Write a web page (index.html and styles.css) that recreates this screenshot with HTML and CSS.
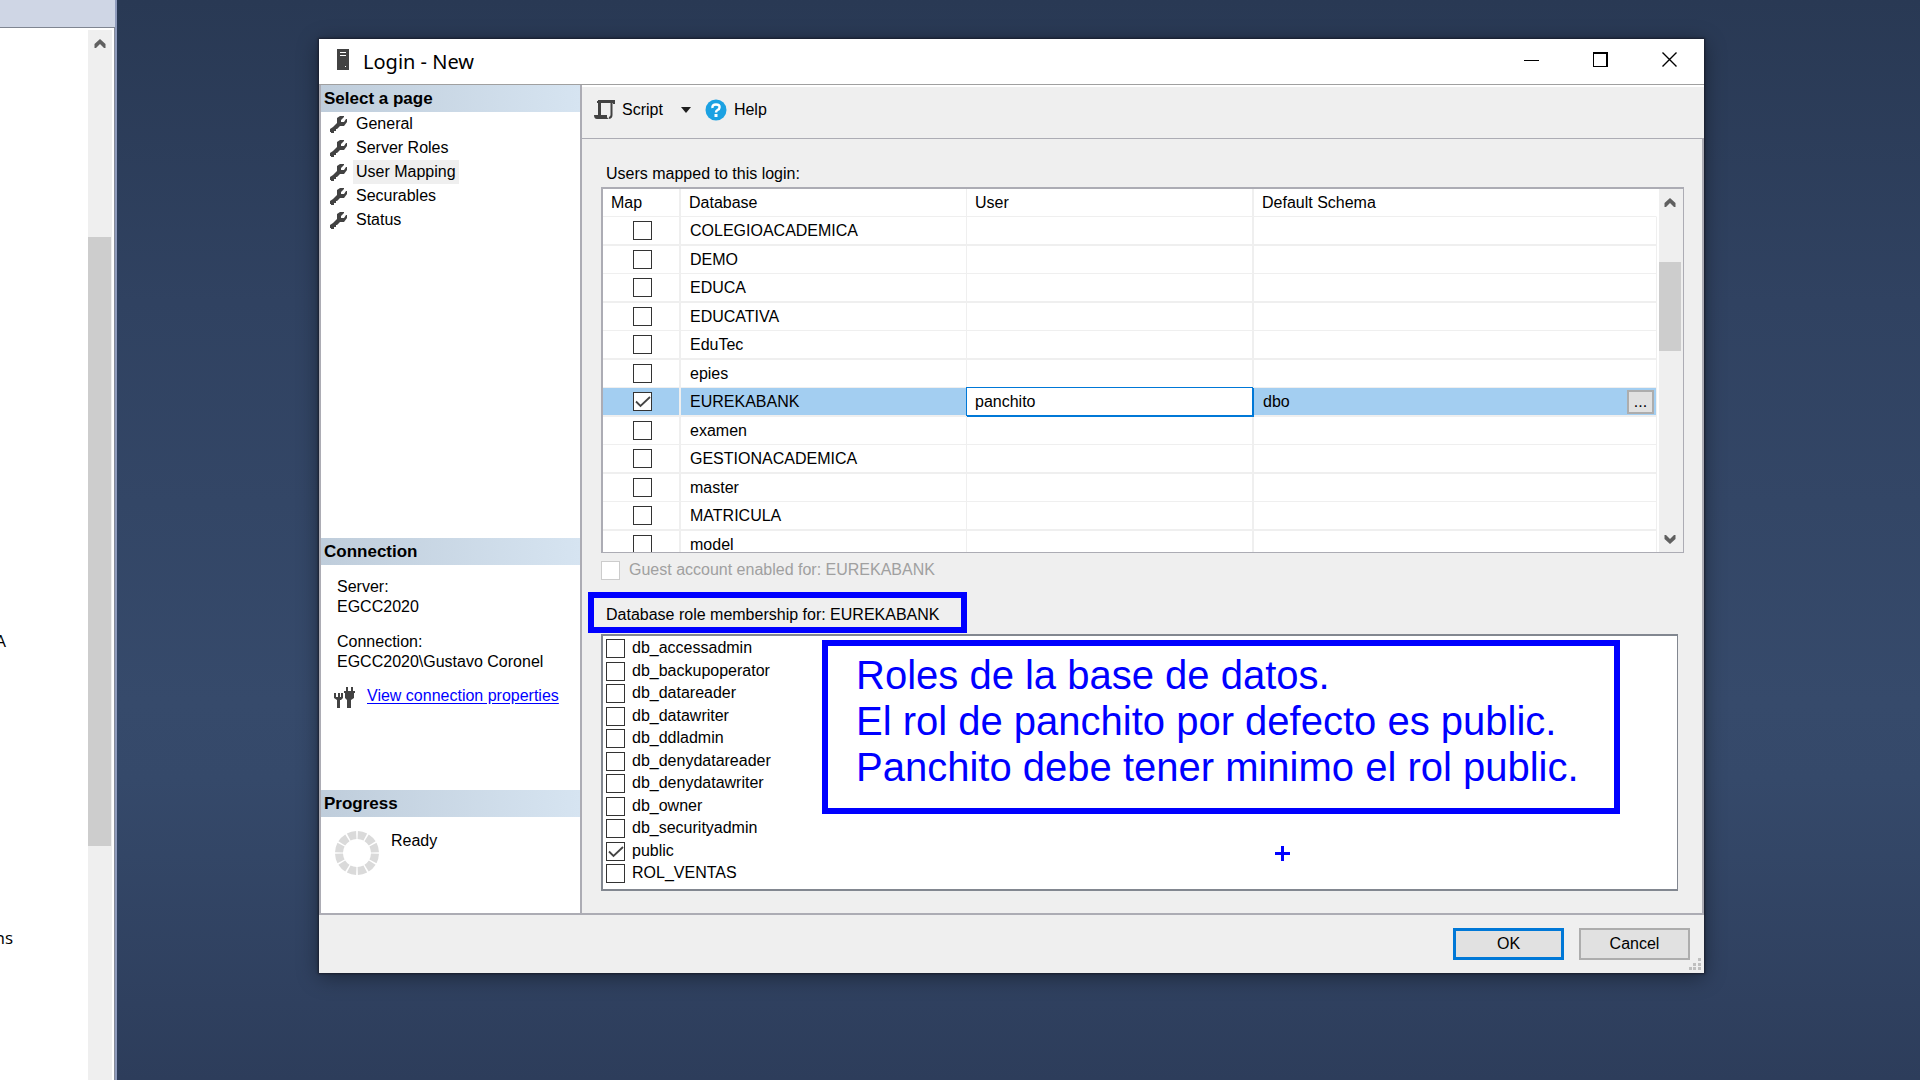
FILE: index.html
```html
<!DOCTYPE html>
<html lang="en">
<head>
<meta charset="utf-8">
<title>Login - New</title>
<link rel="stylesheet" href="styles.css">
</head>
<body>
<div class="desktop">
  <aside class="explorer">
    <div class="explorer-top"></div>
    <div class="explorer-body">
      <div class="explorer-text"><span>A</span><span>ns</span></div>
      <div class="scrollbar">
        <svg class="arrow" width="12" height="9" viewBox="0 0 12 9"><path d="M.5 9V5L6 0l5.500 5v4h-1.500L6 5 2 9z" fill="#606060"/></svg>
        <div class="thumb"></div>
      </div>
    </div>
  </aside>

  <div class="workspace">
    <section class="dialog" role="dialog" aria-labelledby="dialog-title">
      <header class="titlebar">
        <svg width="13" height="21" viewBox="0 0 13 21"><path d="M0 0h12v21H0z" fill="#424242"/><path d="M3 3h6v1H3zM3 6h6v1H3zM8 17h1v1H8z" fill="#fff"/></svg>
        <h1 id="dialog-title">Login - New</h1>
        <div class="controls">
          <button type="button" aria-label="Minimize"><svg width="15" height="15"><path d="M0 8.500h15" stroke="#000"/></svg></button>
          <button type="button" aria-label="Maximize"><svg width="15" height="15"><path d="M0 0h15v15H0zM1 2v12h12V2z" fill-rule="evenodd"/></svg></button>
          <button type="button" aria-label="Close"><svg width="15" height="15"><path d="M.5.5l14 14M14.500.5l-14 14" stroke="#000" stroke-width="1.400"/></svg></button>
        </div>
      </header>

      <div class="content">
        <aside class="sidebar">
          <nav class="pages">
            <h2>Select a page</h2>
            <ul>
              <li><svg class="wrench" viewBox="0 0 17 18"><use href="#wrench"/></svg><a href="#">General</a></li>
              <li><svg class="wrench" viewBox="0 0 17 18"><use href="#wrench"/></svg><a href="#">Server Roles</a></li>
              <li><svg class="wrench" viewBox="0 0 17 18"><use href="#wrench"/></svg><a href="#" class="current">User Mapping</a></li>
              <li><svg class="wrench" viewBox="0 0 17 18"><use href="#wrench"/></svg><a href="#">Securables</a></li>
              <li><svg class="wrench" viewBox="0 0 17 18"><use href="#wrench"/></svg><a href="#">Status</a></li>
            </ul>
          </nav>
          <section class="connection">
            <h2>Connection</h2>
            <dl>
              <dt>Server:</dt><dd>EGCC2020</dd>
              <dt>Connection:</dt><dd>EGCC2020\Gustavo Coronel</dd>
            </dl>
            <p class="properties">
              <svg width="21" height="21" viewBox="0 0 21 21"><path d="M0 6h2v4h2V6h2v4h1V6h2v5l-2 2H6v8H3v-8L0 11zM12 0h2v4h-2zM17 0h2v4h-2zM10 4h11v2h-1v5l-3 2v8h-4v-8l-2-2V6h-1z" fill="#424242"/></svg>
              <a href="#">View connection properties</a>
            </p>
          </section>
          <section class="progress">
            <h2>Progress</h2>
            <div class="status">
              <svg width="44" height="44" viewBox="0 0 44 44"><circle cx="22" cy="22" r="18" fill="none" stroke="#dadada" stroke-width="8" pathLength="120" stroke-dasharray="8.400 1.600" stroke-dashoffset="-0.800"/></svg>
              <span>Ready</span>
            </div>
          </section>
        </aside>

        <main class="main">
          <div class="toolbar">
            <button type="button"><svg width="21" height="20" viewBox="0 0 21 20"><path d="M4 0h17v4h-2V3H4zM3 1h4v14H4V3H3z" fill="#424242"/><path d="M17.500 2v13q0 2.500-2.500 3" fill="none" stroke="#424242" stroke-width="2"/><path d="M0 15h13v2q0 1 2 2H3Q0 19 0 15z" fill="#424242"/></svg>Script</button>
            <button type="button" class="drop" aria-label="Script options"><svg width="10" height="6"><path d="M0 0h10L5 6z" fill="#1e1e1e"/></svg></button>
            <button type="button"><svg width="22" height="22" viewBox="0 0 22 22"><circle cx="11" cy="11" r="10.500" fill="#1ba1e2"/><path d="M7.500 9Q7 5.500 11 5.500t3.500 3q0 1.500-2 2.500-1.500.8-1.500 2.500" fill="none" stroke="#fff" stroke-width="2.500"/><path d="M9.500 15h3v3h-3z" fill="#fff"/></svg>Help</button>
          </div>

          <div class="panel">
            <p class="caption" id="mapped">Users mapped to this login:</p>
            <div class="grid">
              <div class="grid-scroll">
              <table aria-labelledby="mapped">
                <colgroup><col class="col-map"><col class="col-db"><col class="col-user"><col></colgroup>
                <thead><tr><th>Map</th><th>Database</th><th>User</th><th>Default Schema</th></tr></thead>
                <tbody>
                  <tr><td><input type="checkbox" aria-label="Map COLEGIOACADEMICA"></td><td>COLEGIOACADEMICA</td><td></td><td></td></tr>
                  <tr><td><input type="checkbox" aria-label="Map DEMO"></td><td>DEMO</td><td></td><td></td></tr>
                  <tr><td><input type="checkbox" aria-label="Map EDUCA"></td><td>EDUCA</td><td></td><td></td></tr>
                  <tr><td><input type="checkbox" aria-label="Map EDUCATIVA"></td><td>EDUCATIVA</td><td></td><td></td></tr>
                  <tr><td><input type="checkbox" aria-label="Map EduTec"></td><td>EduTec</td><td></td><td></td></tr>
                  <tr><td><input type="checkbox" aria-label="Map epies"></td><td>epies</td><td></td><td></td></tr>
                  <tr class="selected"><td><input type="checkbox" checked aria-label="Map EUREKABANK"></td><td>EUREKABANK</td><td class="editing"><input type="text" value="panchito" aria-label="User"></td><td><div class="schema"><span>dbo</span><button type="button" aria-label="Browse schemas">...</button></div></td></tr>
                  <tr><td><input type="checkbox" aria-label="Map examen"></td><td>examen</td><td></td><td></td></tr>
                  <tr><td><input type="checkbox" aria-label="Map GESTIONACADEMICA"></td><td>GESTIONACADEMICA</td><td></td><td></td></tr>
                  <tr><td><input type="checkbox" aria-label="Map master"></td><td>master</td><td></td><td></td></tr>
                  <tr><td><input type="checkbox" aria-label="Map MATRICULA"></td><td>MATRICULA</td><td></td><td></td></tr>
                  <tr><td><input type="checkbox" aria-label="Map model"></td><td>model</td><td></td><td></td></tr>
                </tbody>
              </table>
              </div>
              <div class="scrollbar">
                <svg class="arrow" width="12" height="9" viewBox="0 0 12 9"><path d="M.5 9V5L6 0l5.500 5v4h-1.500L6 5 2 9z" fill="#606060"/></svg>
                <div class="thumb"></div>
                <svg class="arrow down" width="12" height="9" viewBox="0 0 12 9"><path d="M.5 0v4L6 9l5.500-5V0h-1.500L6 4 2 0z" fill="#606060"/></svg>
              </div>
            </div>

            <label class="guest"><input type="checkbox" disabled>Guest account enabled for: EUREKABANK</label>

            <section class="roles">
              <p class="caption" id="roles">Database role membership for: EUREKABANK</p>
              <ul class="role-list" aria-labelledby="roles">
                <li><label><input type="checkbox">db_accessadmin</label></li>
                <li><label><input type="checkbox">db_backupoperator</label></li>
                <li><label><input type="checkbox">db_datareader</label></li>
                <li><label><input type="checkbox">db_datawriter</label></li>
                <li><label><input type="checkbox">db_ddladmin</label></li>
                <li><label><input type="checkbox">db_denydatareader</label></li>
                <li><label><input type="checkbox">db_denydatawriter</label></li>
                <li><label><input type="checkbox">db_owner</label></li>
                <li><label><input type="checkbox">db_securityadmin</label></li>
                <li><label><input type="checkbox" checked>public</label></li>
                <li><label><input type="checkbox">ROL_VENTAS</label></li>
              </ul>
              <div class="highlight"></div>
              <div class="note">
                <p>Roles de la base de datos.</p>
                <p>El rol de panchito por defecto es public.</p>
                <p>Panchito debe tener minimo el rol public.</p>
              </div>
              <svg class="cross" width="15" height="15"><path d="M6 0h3v6h6v3H9v6H6V9H0V6h6z" fill="#00f"/></svg>
            </section>
          </div>
        </main>
      </div>

      <footer class="footer">
        <button type="button" class="ok">OK</button>
        <button type="button">Cancel</button>
        <svg class="grip" width="12" height="12"><path d="M9 0h3v3H9zM4 5h3v3H4zM9 5h3v3H9zM0 9h3v3H0zM4 9h3v3H4zM9 9h3v3H9z" fill="#bfbfbf"/></svg>
      </footer>
    </section>
  </div>
</div>

<svg width="0" height="0" class="defs">
  <symbol id="wrench" viewBox="0 0 17 18"><path d="M7 3l3-2h4v1l-3 3v2h3l2-3h1v3l-3 4h-4l-3 3H6v2H4v2H1v-1H0v-3l3-2 4-4z" fill="#424242"/></symbol>
</svg>
</body>
</html>
```
FILE: styles.css
```css
* { box-sizing: border-box; }

body {
  margin: 0;
  font: 16px/20px "Liberation Sans", Arial, sans-serif;
  color: #000;
}

h1, h2, p, ul, dl, dd { margin: 0; padding: 0; }
ul { list-style: none; }
svg { display: block; flex: none; }
button, input { font: inherit; color: inherit; margin: 0; padding: 0; }
button { border: 0; background: none; }
.defs { position: absolute; }

.desktop {
  display: flex;
  min-height: 100vh;
  background: linear-gradient(#293954, #304261 28%, #364a6b 65%, #35496a 72%, #2d3d5b);
}

/* Panel behind the dialog, cut by the left edge of the screen */
.explorer {
  display: flex;
  flex-direction: column;
  width: 117px;
  border-right: 2px solid #8e9bbc;
}
.explorer-top {
  height: 28px;
  background: #cfd6e5;
  border-bottom: 1px solid #7f8591;
}
.explorer-body {
  flex: 1;
  display: flex;
  justify-content: space-between;
  padding: 2px 2px 0 0;
  background: #fff;
  border-right: 1px solid #868b98;
}
.explorer-text {
  display: flex;
  flex-direction: column;
  align-items: flex-end;
  gap: 277px;
  width: 13px;
  padding-top: 601px;
  overflow: hidden;
  font: 17px/20px "Open Sans", sans-serif;
}
.explorer-text span:first-child { margin-right: 7px; }

.scrollbar {
  display: flex;
  flex-direction: column;
  width: 24px;
  padding: 9px 1px 9px 0;
  background: #efefef;
}
.arrow { margin: 0 auto; }
.arrow.down { margin-top: auto; }
.thumb { background: #cdcdcd; }
.explorer .thumb { height: 609px; margin-top: 189px; }
.grid .scrollbar { padding: 9px 2px 8px 0; }
.grid .thumb { height: 89px; margin-top: 55px; }

.workspace {
  flex: 1;
  min-width: 0;
  padding: 39px 216px 40px 202px;
}

.dialog {
  background: #efefef;
  box-shadow: 0 0 2px 1px rgba(20, 20, 30, .7), 0 4px 20px rgba(0, 0, 0, .4);
}

.titlebar {
  display: flex;
  align-items: center;
  height: 46px;
  padding: 0 27px 4px 18px;
  background: #fff;
  border-bottom: 1px solid #a0a0a0;
}
.titlebar h1 {
  margin-left: 13px;
  padding-top: 4px;
  font: 20px/28px "Noto Sans", sans-serif;
}
.controls {
  display: flex;
  gap: 54px;
  margin-left: auto;
}
.controls button { width: 15px; height: 15px; }

.content {
  display: flex;
  border-bottom: 2px solid #acacb4;
}

.sidebar {
  flex: none;
  width: 263px;
  background: #fff;
  border: solid #acacb4;
  border-width: 0 2px;
}
.sidebar h2 {
  padding: 3px;
  font-size: 17px;
  line-height: 21px;
  background: linear-gradient(90deg, #bfcddb, #d6e4f1);
}
.pages { min-height: 453px; }
.pages li {
  display: flex;
  align-items: center;
  gap: 6px;
  padding-left: 9px;
}
.pages a {
  padding: 2px 3px;
  color: inherit;
  text-decoration: none;
}
.pages .current { background: #efefef; }
.wrench { width: 17px; height: 18px; }

.connection { min-height: 252px; }
.connection dl { padding: 12px 16px 0; }
.connection dd { margin-bottom: 15px; }
.properties {
  display: flex;
  gap: 12px;
  padding-left: 13px;
  margin-top: -4px;
}
.properties svg { margin-top: 4px; }
.properties a { color: #00f; text-underline-offset: 2px; margin-top: 3px; }

.progress { min-height: 123px; }
.status {
  display: flex;
  gap: 12px;
  padding: 14px;
}

.main {
  flex: 1;
  min-width: 0;
  display: flex;
  flex-direction: column;
}
.toolbar {
  display: flex;
  align-items: center;
  height: 54px;
  padding: 0 12px 6px;
  border-top: 2px solid #fff;
  border-bottom: 1px solid #acacb4;
}
.toolbar button { display: flex; align-items: center; gap: 7px; }
.toolbar .drop { margin: 0 14px 0 18px; }

.panel {
  flex: 1;
  padding: 25px 18px 22px 19px;
  border-right: 2px solid #acacb4;
}
.caption { padding-left: 5px; }

.grid {
  display: flex;
  height: 366px;
  margin-top: 3px;
  background: #fff;
  border: solid #acacb4;
  border-width: 2px 1px 1px 2px;
}
.grid-scroll {
  flex: 1;
  min-width: 0;
  margin-right: 2px;
  overflow: hidden;
}
table {
  width: 100%;
  table-layout: fixed;
  border-collapse: separate;
  border-spacing: 0;
}
.col-map { width: 78px; }
.col-db { width: 286px; }
.col-user { width: 287px; }
th, td {
  padding: 0 9px;
  text-align: left;
  font-weight: normal;
  border: solid #efefef;
  border-width: 0 1px 1px 0;
}
th { height: 28px; padding: 0 8px; }
th:last-child { border-right-color: #fff; }
td { height: 28px; }
tr:nth-child(odd) td { height: 29px; border-bottom-width: 2px; }
th:nth-child(odd), td:nth-child(odd) { border-right-width: 2px; }
td:first-child { padding: 0 0 0 30px; }
.selected td { background: #a3cef1; background-clip: padding-box; }
.selected .editing {
  padding: 0;
  background: #fff;
  border-color: #0078d7;
  box-shadow: -1px -1px 0 #0078d7;
}
.editing input {
  display: block;
  width: 100%;
  height: 26px;
  padding: 0 8px;
  border: 0;
  outline: 0;
  background: #fff;
}
.selected td:last-child { padding-right: 2px; }
.schema {
  display: flex;
  align-items: center;
  justify-content: space-between;
}
.schema button {
  width: 27px;
  height: 24px;
  line-height: 18px;
  background: #e1e1e1;
  border: 2px solid #adadad;
}

input[type="checkbox"] {
  appearance: none;
  display: block;
  flex: none;
  width: 19px;
  height: 19px;
  background: #fff;
  border: 1px solid #333;
}
input[type="checkbox"]:checked {
  background: #fff url("data:image/svg+xml,%3Csvg xmlns='http://www.w3.org/2000/svg' width='17' height='17'%3E%3Cpath d='M2 8.500l4.500 4.500L16 4' fill='none' stroke='%23444' stroke-width='1.800'/%3E%3C/svg%3E") center;
}
input[type="checkbox"]:disabled { border-color: #ccc; }

.guest {
  display: flex;
  align-items: center;
  gap: 9px;
  margin-top: 7px;
  color: #a0a0a0;
}

.roles {
  position: relative;
  margin: 25px 6px 0 0;
}
.role-list {
  margin-top: 9px;
  padding: 2px 3px 3px;
  background: #fff;
  border: solid #828790;
  border-width: 2px 1px 2px 2px;
}
.role-list li { height: 22px; }
.role-list li:nth-child(odd) { height: 23px; }
.role-list label { display: flex; align-items: center; gap: 7px; }

/* Presenter's marks drawn over the dialog */
.highlight {
  position: absolute;
  top: -13px;
  left: -13px;
  width: 379px;
  height: 41px;
  border: 6px solid #00f;
}
.note {
  position: absolute;
  top: 35px;
  left: 221px;
  width: 798px;
  height: 174px;
  padding: 6px 28px;
  border: 6px solid #00f;
  background: #fff;
  color: #00f;
  font-size: 40px;
  line-height: 46px;
  white-space: nowrap;
}
.cross { position: absolute; top: 241px; left: 674px; }

.footer {
  position: relative;
  display: flex;
  justify-content: flex-end;
  gap: 15px;
  padding: 13px 14px;
}
.footer button {
  width: 111px;
  height: 32px;
  background: #e1e1e1;
  border: 2px solid #adadad;
}
.footer .ok { border: 3px solid #0078d7; }
.grip { position: absolute; right: 3px; bottom: 3px; }
```
